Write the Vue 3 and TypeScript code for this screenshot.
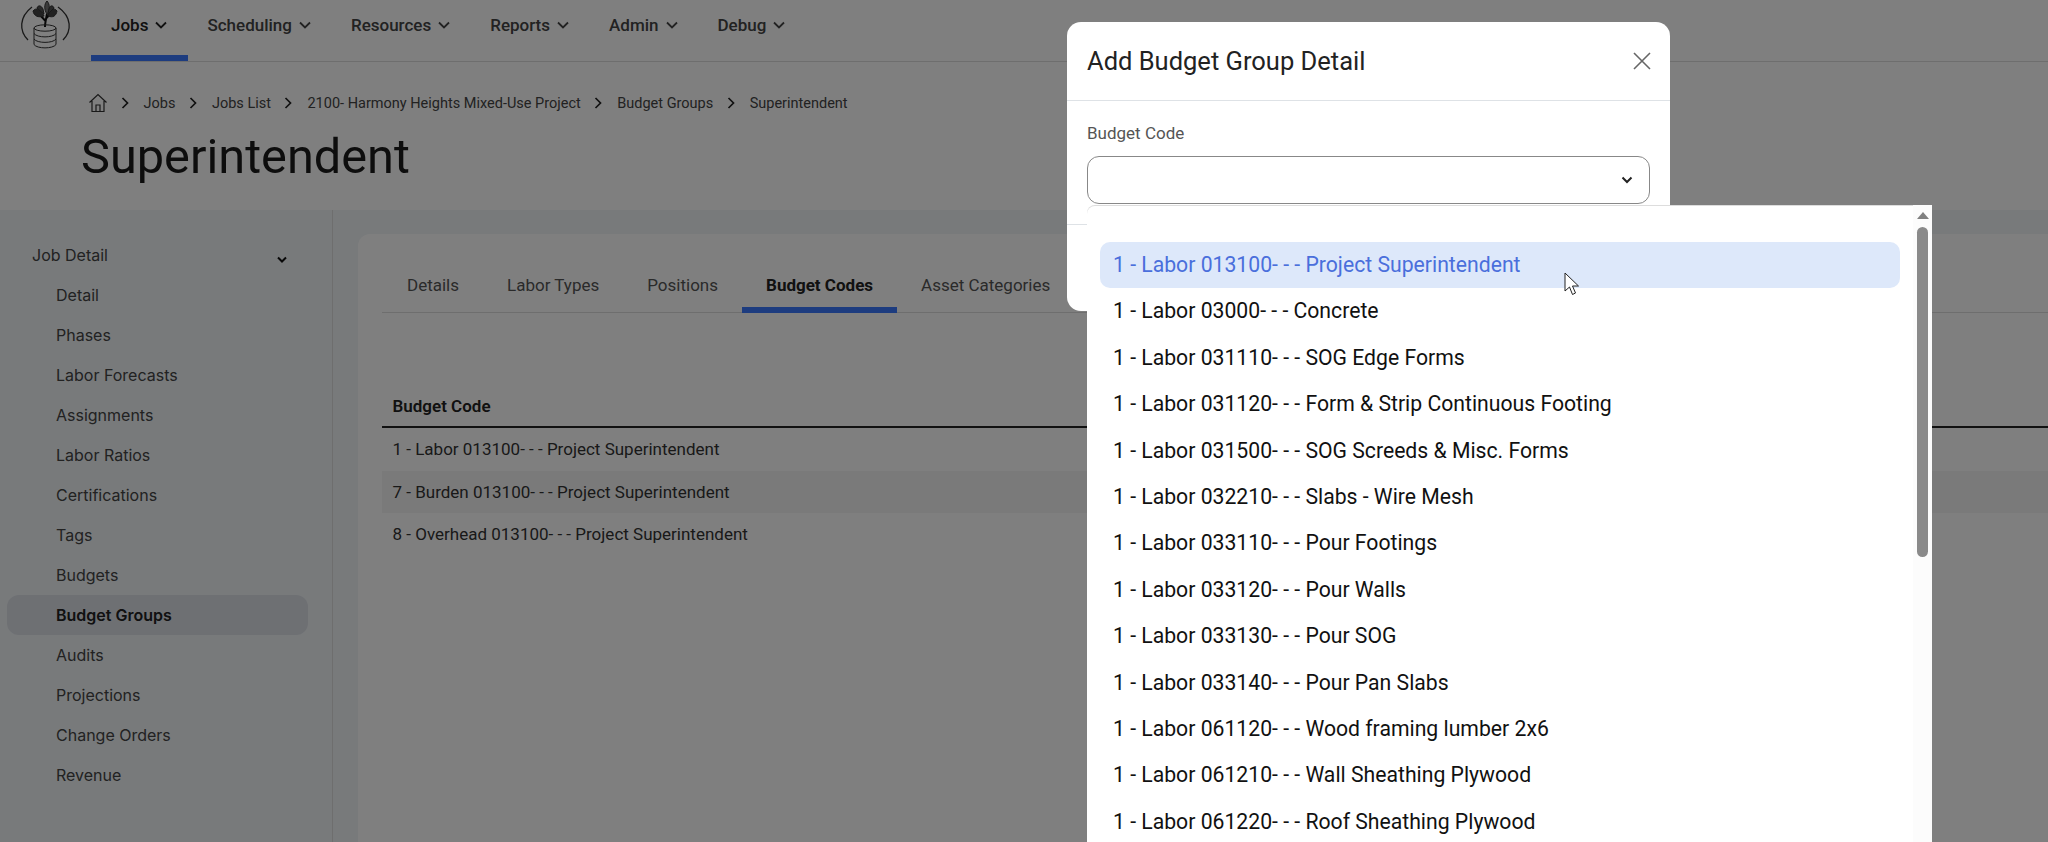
<script setup lang="ts">
const navItems = ["Jobs", "Scheduling", "Resources", "Reports", "Admin", "Debug"];
const crumbs = ["Jobs", "Jobs List", "2100- Harmony Heights Mixed-Use Project", "Budget Groups", "Superintendent"];
const sideItems = [
  "Detail", "Phases", "Labor Forecasts", "Assignments", "Labor Ratios", "Certifications", "Tags",
  "Budgets", "Budget Groups", "Audits", "Projections", "Change Orders", "Revenue",
];
const tabs = ["Details", "Labor Types", "Positions", "Budget Codes", "Asset Categories"];
const rows = [
  "1 - Labor 013100- - - Project Superintendent",
  "7 - Burden 013100- - - Project Superintendent",
  "8 - Overhead 013100- - - Project Superintendent",
];
const options = [
  "1 - Labor 013100- - - Project Superintendent",
  "1 - Labor 03000- - - Concrete",
  "1 - Labor 031110- - - SOG Edge Forms",
  "1 - Labor 031120- - - Form & Strip Continuous Footing",
  "1 - Labor 031500- - - SOG Screeds & Misc. Forms",
  "1 - Labor 032210- - - Slabs - Wire Mesh",
  "1 - Labor 033110- - - Pour Footings",
  "1 - Labor 033120- - - Pour Walls",
  "1 - Labor 033130- - - Pour SOG",
  "1 - Labor 033140- - - Pour Pan Slabs",
  "1 - Labor 061120- - - Wood framing lumber 2x6",
  "1 - Labor 061210- - - Wall Sheathing Plywood",
  "1 - Labor 061220- - - Roof Sheathing Plywood",
];
</script>

<template>
  <div class="page">
    <header class="topbar">
      <svg class="logo" viewBox="0 0 52 52" fill="none" stroke="#333" stroke-width="1">
        <path d="M12 7C-1 17 -1 31 8 40" stroke-width="1.3" />
        <path d="M38 7C52 17 52 31 43 40" stroke-width="1.3" />
        <path d="M25 27C25 23 26 19 27 14M25.5 21L20 15M26.5 18L32 12" stroke-width="2" stroke="#111" />
        <path d="M27 1C24 4 24 10 27 14C30 10 30 4 27 1Z" fill="#777" />
        <path d="M13 11C16 7 21 9 24 16C18 18 14 16 13 11Z" fill="#444" />
        <path d="M37 11C34 7 30 9 28 16C33 18 36 16 37 11Z" fill="#444" />
        <path d="M17 8C18 5 21 5 23 9L24 14ZM34 8C33 5 30 5 29 9L28 14Z" fill="#555" />
        <ellipse cx="25" cy="28" rx="11" ry="3.2" />
        <path d="M14 28V44.5C17 49 33 49 36 44.5V28M14 33.5C17 38 33 38 36 33.5M14 39C17 43.5 33 43.5 36 39" />
      </svg>
      <nav class="main-nav">
        <a v-for="(item, i) in navItems" :key="item" class="nav-item" :class="{ active: i === 0 }">
          {{ item }}
          <svg class="nav-chevron" viewBox="0 0 12 8" fill="none" stroke="currentColor" stroke-width="1.8">
            <path d="M1 1.5L6 6.5L11 1.5" />
          </svg>
        </a>
      </nav>
    </header>

    <section class="page-head">
      <div class="crumbs">
        <svg class="home" viewBox="0 0 20 20" fill="none" stroke="#333" stroke-width="1.2">
          <path d="M1.5 9.5L10 1.5L18.5 9.5M4 8V18.5H16V8M8 18.5V12H12V18.5" />
        </svg>
        <template v-for="crumb in crumbs" :key="crumb">
          <svg class="crumb-sep" viewBox="0 0 8 12" fill="none" stroke="#222" stroke-width="1.7">
            <path d="M1.5 1L6.5 6L1.5 11" />
          </svg>
          <span class="crumb">{{ crumb }}</span>
        </template>
      </div>
      <h1 class="title">Superintendent</h1>
    </section>

    <div class="body">
      <aside class="sidebar">
        <div class="side-head">
          <span>Job Detail</span>
          <svg class="side-chevron" viewBox="0 0 10 7" fill="none" stroke="#111" stroke-width="2">
            <path d="M1 1.5L5 5.5L9 1.5" />
          </svg>
        </div>
        <a v-for="item in sideItems" :key="item" class="side-item" :class="{ active: item === 'Budget Groups' }">{{ item }}</a>
      </aside>

      <main class="content">
        <div class="card">
          <div class="tabs">
            <a v-for="tab in tabs" :key="tab" class="tab" :class="{ active: tab === 'Budget Codes' }">{{ tab }}</a>
          </div>
          <table class="grid">
            <thead>
              <tr><th>Budget Code</th></tr>
            </thead>
            <tbody>
              <tr v-for="row in rows" :key="row"><td>{{ row }}</td></tr>
            </tbody>
          </table>
        </div>
      </main>
    </div>

    <div class="backdrop"></div>

    <div class="modal" role="dialog" aria-modal="true">
      <div class="modal-head">
        <h2>Add Budget Group Detail</h2>
        <svg class="close" viewBox="0 0 18 18" fill="none" stroke="#666" stroke-width="1.6">
          <path d="M1 1L17 17M17 1L1 17" />
        </svg>
      </div>
      <div class="modal-body">
        <label>Budget Code</label>
        <div class="select">
          <svg viewBox="0 0 12 8" fill="none" stroke="#222" stroke-width="2">
            <path d="M1.5 1.5L6 6L10.5 1.5" />
          </svg>
          <div class="dropdown">
            <ul>
              <li v-for="(opt, i) in options" :key="opt" :class="{ hover: i === 0 }">{{ opt }}</li>
            </ul>
            <div class="scroll">
              <i class="scroll-up"></i>
              <i class="scroll-thumb"></i>
            </div>
            <svg class="cursor" viewBox="0 0 16 24">
              <path d="M1 1V19L5.5 15L8.5 22.5L11.5 21L8.5 14H14.5Z" fill="#fff" stroke="#222" stroke-width="1" />
            </svg>
          </div>
        </div>
      </div>
      <div class="modal-foot"></div>
    </div>
  </div>
</template>

<style>
html,
body {
  margin: 0;
  background: #fff;
}
</style>

<style scoped>
.page {
  position: relative;
  width: 2048px;
  height: 842px;
  overflow: hidden;
  background: #fff;
  font-family: Roboto, "Liberation Sans", sans-serif;
  font-size: 17px;
  color: #222;
}
.topbar {
  display: flex;
  height: 61px;
  border-bottom: 1px solid #ddd;
  padding-left: 20px;
}
.logo {
  width: 52px;
  height: 52px;
  margin-right: 19px;
  flex: none;
  overflow: visible;
}
.main-nav {
  display: flex;
}
.nav-item {
  display: flex;
  align-items: center;
  gap: 7px;
  height: 61px;
  padding: 0 20px 6px;
  box-sizing: border-box;
  color: #444;
  font-weight: 500;
  border-bottom: 6px solid transparent;
}
.nav-item.active {
  color: #222;
  padding-right: 21px;
  margin-right: -1px;
  border-bottom-color: #3a78ff;
}
.nav-chevron {
  width: 12px;
  height: 8px;
}
.page-head {
  height: 148px;
  padding: 32px 0 0 88px;
  box-sizing: border-box;
}
.crumbs {
  display: flex;
  align-items: center;
  height: 18px;
  font-size: 14.5px;
  color: #444;
}
.home {
  width: 20px;
  height: 20px;
  margin-right: 12.5px;
}
.crumb-sep {
  width: 8px;
  height: 12px;
  margin-right: 15px;
}
.crumb {
  margin-right: 13.5px;
}
.title {
  margin: 17px 0 0 -7px;
  font-size: 48.7px;
  line-height: 56px;
  font-weight: 400;
  color: #1a1a1a;
}
.body {
  display: flex;
  height: 632px;
  background: #f0f4f7;
}
.sidebar {
  width: 333px;
  flex: none;
  border-right: 1px solid #ddd;
  padding: 25px 0 0 7px;
  box-sizing: border-box;
  font-family: Inter, sans-serif;
  font-size: 16px;
  color: #444;
}
.side-head {
  display: flex;
  align-items: center;
  justify-content: space-between;
  width: 301px;
  height: 40px;
  padding: 0 21px 0 25px;
  box-sizing: border-box;
}
.side-chevron {
  width: 10px;
  height: 7px;
  margin-top: 9px;
}
.side-item {
  display: flex;
  align-items: center;
  width: 301px;
  height: 40px;
  padding-left: 49px;
  box-sizing: border-box;
}
.side-item.active {
  background: #dce0e7;
  border-radius: 12px;
  font-weight: 600;
  color: #222;
}
.content {
  flex: 1;
  padding: 24px 0 0 25px;
}
.card {
  height: 100%;
  background: #fff;
  border-radius: 12px 0 0 0;
  padding: 0 0 0 24px;
}
.tabs {
  display: flex;
  height: 79px;
  padding-top: 27px;
  box-sizing: border-box;
  border-bottom: 1px solid #ddd;
  color: #555;
}
.tab {
  height: 52px;
  padding: 14px 24px 0;
  box-sizing: border-box;
}
.tab:first-child {
  padding-left: 25px;
}
.tab.active {
  font-weight: 700;
  color: #222;
  border-bottom: 6px solid #3a78ff;
}
.grid {
  width: 100%;
  margin-top: 72px;
  border-collapse: collapse;
}
.grid th {
  height: 41px;
  padding: 0 10.5px;
  text-align: left;
  font-weight: 600;
  border-bottom: 2px solid #222;
}
.grid td {
  height: 42.5px;
  padding: 0 10.5px;
  color: #333;
}
.grid tbody tr:nth-child(even) {
  background: #f5f5f5;
}
.backdrop {
  position: absolute;
  inset: 0;
  background: rgba(0, 0, 0, 0.5);
}
.modal {
  position: absolute;
  left: 1067px;
  top: 22px;
  width: 603px;
  height: 289px;
  background: #fff;
  border-radius: 14px;
}
.modal-head {
  display: flex;
  align-items: center;
  justify-content: space-between;
  height: 79px;
  padding: 0 19px 0 20px;
  box-sizing: border-box;
  border-bottom: 1px solid #dee2e6;
}
.modal-head h2 {
  margin: 0;
  font-size: 25.5px;
  font-weight: 400;
  color: #222;
}
.close {
  width: 18px;
  height: 18px;
}
.modal-body {
  height: 124px;
  padding: 23px 20px 0;
  box-sizing: border-box;
  border-bottom: 1px solid #dee2e6;
}
.modal-body label {
  display: block;
  color: #555;
  line-height: 19px;
  margin-bottom: 13px;
}
.select {
  position: relative;
  display: flex;
  align-items: center;
  justify-content: flex-end;
  height: 48px;
  padding-right: 16px;
  border: 1px solid #888;
  border-radius: 12px;
  box-sizing: border-box;
}
.select > svg {
  width: 12px;
  height: 8px;
}
.dropdown {
  position: absolute;
  left: -1px;
  top: 48px;
  width: 845px;
  height: 640px;
  background: #fff;
  border-radius: 8px 0 0 0;
  box-shadow: inset 0 1px 0 #ddd;
  font-size: 21.2px;
  color: #111;
  overflow: hidden;
}
.dropdown ul {
  list-style: none;
  margin: 0;
  padding: 37px 32px 0 13px;
}
.dropdown li {
  height: 46.4px;
  line-height: 45px;
  padding-left: 13px;
  border-radius: 10px;
}
.dropdown li.hover {
  background: #dde8fa;
  color: #4a6fdc;
}
.scroll {
  position: absolute;
  top: 0;
  right: 0;
  width: 19px;
  height: 100%;
  background: #fcfcfc;
}
.scroll-up {
  position: absolute;
  left: 4px;
  top: 7px;
  width: 0;
  height: 0;
  border: 6px solid transparent;
  border-top: 0;
  border-bottom: 7px solid #808080;
}
.scroll-thumb {
  position: absolute;
  left: 4px;
  top: 22px;
  width: 11px;
  height: 330px;
  border-radius: 6px;
  background: #8a8a8a;
}
.cursor {
  position: absolute;
  left: 477px;
  top: 67px;
  width: 16px;
  height: 24px;
}
</style>
